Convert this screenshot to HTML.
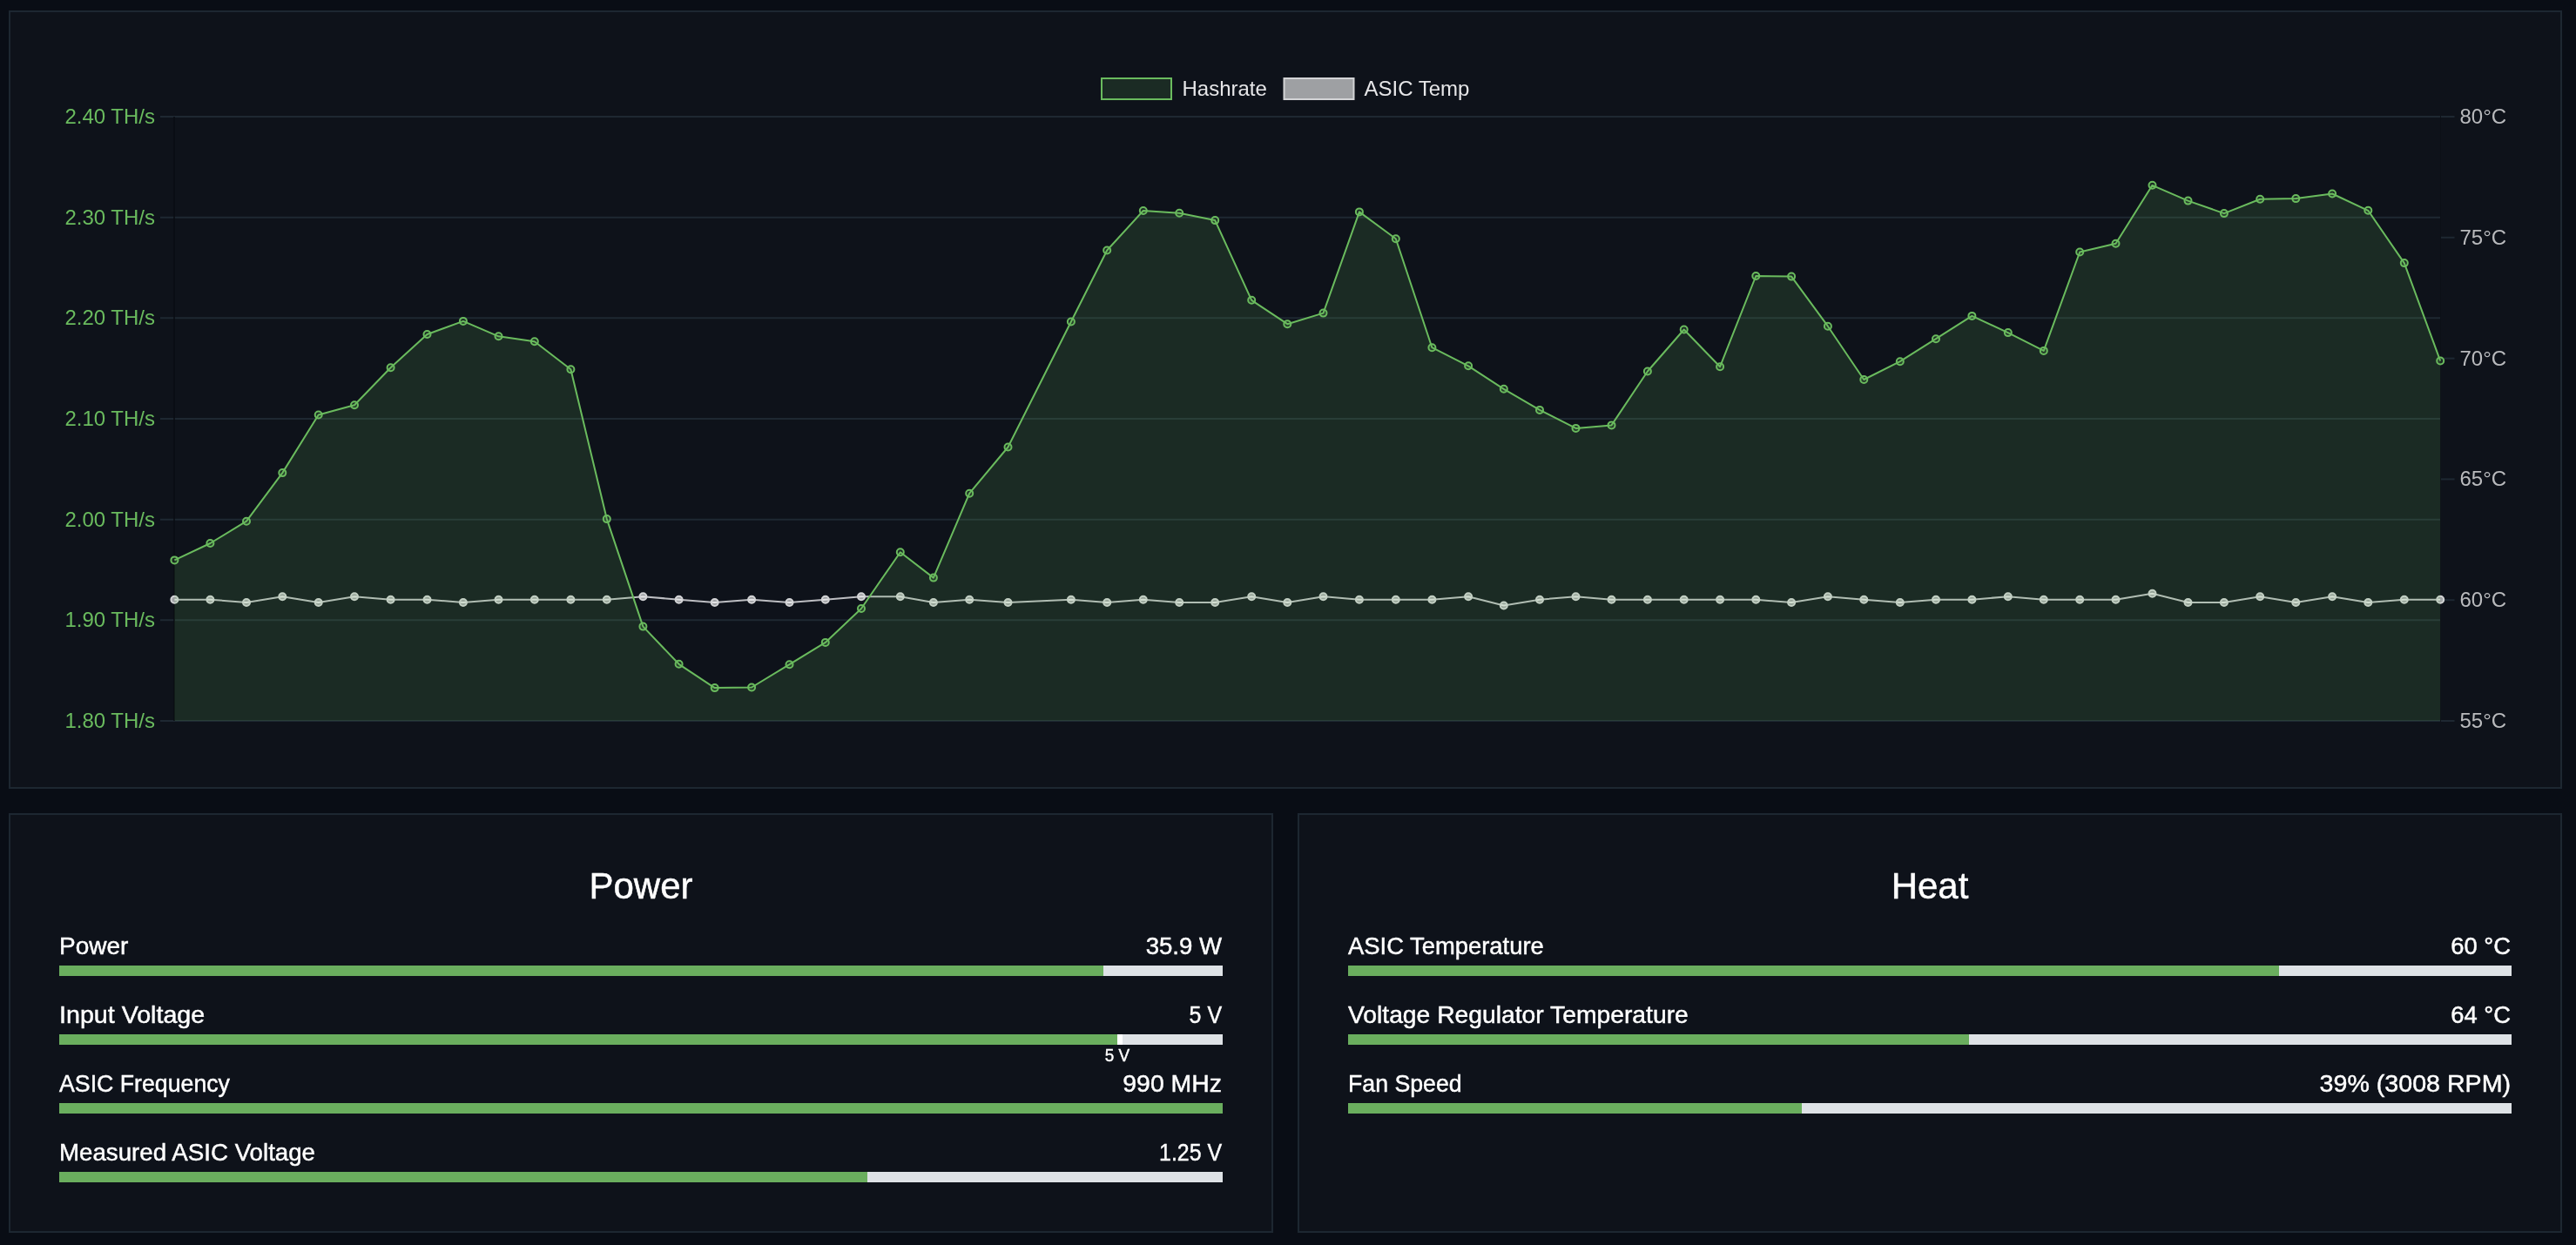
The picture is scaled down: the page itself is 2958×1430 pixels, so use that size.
<!DOCTYPE html>
<html><head><meta charset="utf-8"><title>AxeOS</title>
<style>
html,body{margin:0;padding:0;}
body{width:2958px;height:1430px;overflow:hidden;background:#090d15;position:relative;font-family:"Liberation Sans",sans-serif;}
.card{position:absolute;box-sizing:border-box;border:2px solid #1d2731;background:#0e121a;}
.chart{position:absolute;left:0;top:0;will-change:transform;}
.txt{position:absolute;left:0;top:0;width:2958px;height:1430px;will-change:transform;}
.lax{font-family:"Liberation Sans",sans-serif;font-size:24px;fill:#6abb5e;}
.rax{font-family:"Liberation Sans",sans-serif;font-size:24px;fill:#b9babd;}
.leg{font-family:"Liberation Sans",sans-serif;font-size:24px;fill:#e6e6e8;}
.title{position:absolute;top:993px;width:1452px;text-align:center;color:#fff;font-size:42px;line-height:50px;}
.lab,.val{position:absolute;color:#fff;font-size:28px;line-height:34px;white-space:nowrap;}
.lab,.val,.title,.mtxt{-webkit-text-stroke:0.45px #fff;}
.lab{transform-origin:0 50%;}
.val{transform-origin:100% 50%;margin-left:-1px;}
.val{width:1336px;text-align:right;}
.bar{position:absolute;width:1336px;height:12px;background:#dee2e6;}
.fillb{height:12px;background:#6aae5e;}
.mark{position:absolute;width:6px;height:12px;background:#fff;}
.mtxt{position:absolute;width:86px;text-align:center;color:#fff;font-size:21px;line-height:24px;transform:scaleX(0.9);}
</style></head>
<body>
<div class="card" style="left:10px;top:12px;width:2932px;height:894px"></div>
<div class="card" style="left:10px;top:934px;width:1452px;height:482px"></div>
<div class="card" style="left:1490px;top:934px;width:1452px;height:482px"></div>
<svg class="chart" width="2958" height="906" viewBox="0 0 2958 906">
<defs><clipPath id="ca"><rect x="190" y="120" width="2625" height="716"/></clipPath></defs>
<line x1="184" y1="134" x2="2802" y2="134" stroke="#1e2832" stroke-width="2"/>
<line x1="184" y1="249.7" x2="2802" y2="249.7" stroke="#1e2832" stroke-width="2"/>
<line x1="184" y1="365.3" x2="2802" y2="365.3" stroke="#1e2832" stroke-width="2"/>
<line x1="184" y1="481" x2="2802" y2="481" stroke="#1e2832" stroke-width="2"/>
<line x1="184" y1="596.7" x2="2802" y2="596.7" stroke="#1e2832" stroke-width="2"/>
<line x1="184" y1="712.3" x2="2802" y2="712.3" stroke="#1e2832" stroke-width="2"/>
<line x1="184" y1="828" x2="2802" y2="828" stroke="#1e2832" stroke-width="2"/>
<line x1="200" y1="134" x2="200" y2="828" stroke="#0a0d13" stroke-width="1.6"/>
<line x1="2802.5" y1="134" x2="2802.5" y2="828" stroke="#0c1017" stroke-width="1"/>
<line x1="2803" y1="134" x2="2818.5" y2="134" stroke="#1e2832" stroke-width="2"/>
<line x1="2803" y1="272.8" x2="2818.5" y2="272.8" stroke="#1e2832" stroke-width="2"/>
<line x1="2803" y1="411.6" x2="2818.5" y2="411.6" stroke="#1e2832" stroke-width="2"/>
<line x1="2803" y1="550.4" x2="2818.5" y2="550.4" stroke="#1e2832" stroke-width="2"/>
<line x1="2803" y1="689.2" x2="2818.5" y2="689.2" stroke="#1e2832" stroke-width="2"/>
<line x1="2803" y1="828" x2="2818.5" y2="828" stroke="#1e2832" stroke-width="2"/>
<text x="178" y="142" text-anchor="end" class="lax">2.40 TH/s</text>
<text x="178" y="257.7" text-anchor="end" class="lax">2.30 TH/s</text>
<text x="178" y="373.3" text-anchor="end" class="lax">2.20 TH/s</text>
<text x="178" y="489" text-anchor="end" class="lax">2.10 TH/s</text>
<text x="178" y="604.7" text-anchor="end" class="lax">2.00 TH/s</text>
<text x="178" y="720.3" text-anchor="end" class="lax">1.90 TH/s</text>
<text x="178" y="836" text-anchor="end" class="lax">1.80 TH/s</text>
<text x="2824.5" y="142" class="rax">80°C</text>
<text x="2824.5" y="280.8" class="rax">75°C</text>
<text x="2824.5" y="419.6" class="rax">70°C</text>
<text x="2824.5" y="558.4" class="rax">65°C</text>
<text x="2824.5" y="697.2" class="rax">60°C</text>
<text x="2824.5" y="836" class="rax">55°C</text>
<g clip-path="url(#ca)"><polyline points="200.4,688.7 241.4,688.7 283,692 324.3,685.2 365.7,692 407,685.2 448.6,688.7 490.5,688.7 531.9,692 572.5,688.7 613.8,688.7 655.4,688.7 696.8,688.7 738.4,685.2 779.6,688.7 820.7,692 863.1,688.7 906.5,692 947.8,688.7 989,685.2 1033.8,685.2 1071.9,692 1113.2,688.7 1157.5,692 1229.9,688.7 1271.2,692 1312.8,688.7 1354.2,692 1395.2,692 1437.2,685.2 1478.3,692 1519.5,685.2 1560.9,688.7 1602.8,688.7 1644.4,688.7 1686.1,685.2 1726.8,695.5 1768,688.7 1809.5,685.2 1850.5,688.7 1891.9,688.7 1933.7,688.7 1975.1,688.7 2016.3,688.7 2057.1,692 2098.9,685.2 2140.3,688.7 2181.8,692 2223,688.7 2264.4,688.7 2305.8,685.2 2346.8,688.7 2388.2,688.7 2429.5,688.7 2471.5,681.7 2512.5,692 2553.9,692 2595.2,685.2 2636.3,692 2678.1,685.2 2719.3,692 2760.8,688.7 2802.2,688.7" fill="none" stroke="#bdbec2" stroke-width="2" stroke-linejoin="round"/>
<circle cx="200.4" cy="688.7" r="4" fill="rgba(255,255,255,0.6)" stroke="#d3d4d6" stroke-width="2"/>
<circle cx="241.4" cy="688.7" r="4" fill="rgba(255,255,255,0.6)" stroke="#d3d4d6" stroke-width="2"/>
<circle cx="283" cy="692" r="4" fill="rgba(255,255,255,0.6)" stroke="#d3d4d6" stroke-width="2"/>
<circle cx="324.3" cy="685.2" r="4" fill="rgba(255,255,255,0.6)" stroke="#d3d4d6" stroke-width="2"/>
<circle cx="365.7" cy="692" r="4" fill="rgba(255,255,255,0.6)" stroke="#d3d4d6" stroke-width="2"/>
<circle cx="407" cy="685.2" r="4" fill="rgba(255,255,255,0.6)" stroke="#d3d4d6" stroke-width="2"/>
<circle cx="448.6" cy="688.7" r="4" fill="rgba(255,255,255,0.6)" stroke="#d3d4d6" stroke-width="2"/>
<circle cx="490.5" cy="688.7" r="4" fill="rgba(255,255,255,0.6)" stroke="#d3d4d6" stroke-width="2"/>
<circle cx="531.9" cy="692" r="4" fill="rgba(255,255,255,0.6)" stroke="#d3d4d6" stroke-width="2"/>
<circle cx="572.5" cy="688.7" r="4" fill="rgba(255,255,255,0.6)" stroke="#d3d4d6" stroke-width="2"/>
<circle cx="613.8" cy="688.7" r="4" fill="rgba(255,255,255,0.6)" stroke="#d3d4d6" stroke-width="2"/>
<circle cx="655.4" cy="688.7" r="4" fill="rgba(255,255,255,0.6)" stroke="#d3d4d6" stroke-width="2"/>
<circle cx="696.8" cy="688.7" r="4" fill="rgba(255,255,255,0.6)" stroke="#d3d4d6" stroke-width="2"/>
<circle cx="738.4" cy="685.2" r="4" fill="rgba(255,255,255,0.6)" stroke="#d3d4d6" stroke-width="2"/>
<circle cx="779.6" cy="688.7" r="4" fill="rgba(255,255,255,0.6)" stroke="#d3d4d6" stroke-width="2"/>
<circle cx="820.7" cy="692" r="4" fill="rgba(255,255,255,0.6)" stroke="#d3d4d6" stroke-width="2"/>
<circle cx="863.1" cy="688.7" r="4" fill="rgba(255,255,255,0.6)" stroke="#d3d4d6" stroke-width="2"/>
<circle cx="906.5" cy="692" r="4" fill="rgba(255,255,255,0.6)" stroke="#d3d4d6" stroke-width="2"/>
<circle cx="947.8" cy="688.7" r="4" fill="rgba(255,255,255,0.6)" stroke="#d3d4d6" stroke-width="2"/>
<circle cx="989" cy="685.2" r="4" fill="rgba(255,255,255,0.6)" stroke="#d3d4d6" stroke-width="2"/>
<circle cx="1033.8" cy="685.2" r="4" fill="rgba(255,255,255,0.6)" stroke="#d3d4d6" stroke-width="2"/>
<circle cx="1071.9" cy="692" r="4" fill="rgba(255,255,255,0.6)" stroke="#d3d4d6" stroke-width="2"/>
<circle cx="1113.2" cy="688.7" r="4" fill="rgba(255,255,255,0.6)" stroke="#d3d4d6" stroke-width="2"/>
<circle cx="1157.5" cy="692" r="4" fill="rgba(255,255,255,0.6)" stroke="#d3d4d6" stroke-width="2"/>
<circle cx="1229.9" cy="688.7" r="4" fill="rgba(255,255,255,0.6)" stroke="#d3d4d6" stroke-width="2"/>
<circle cx="1271.2" cy="692" r="4" fill="rgba(255,255,255,0.6)" stroke="#d3d4d6" stroke-width="2"/>
<circle cx="1312.8" cy="688.7" r="4" fill="rgba(255,255,255,0.6)" stroke="#d3d4d6" stroke-width="2"/>
<circle cx="1354.2" cy="692" r="4" fill="rgba(255,255,255,0.6)" stroke="#d3d4d6" stroke-width="2"/>
<circle cx="1395.2" cy="692" r="4" fill="rgba(255,255,255,0.6)" stroke="#d3d4d6" stroke-width="2"/>
<circle cx="1437.2" cy="685.2" r="4" fill="rgba(255,255,255,0.6)" stroke="#d3d4d6" stroke-width="2"/>
<circle cx="1478.3" cy="692" r="4" fill="rgba(255,255,255,0.6)" stroke="#d3d4d6" stroke-width="2"/>
<circle cx="1519.5" cy="685.2" r="4" fill="rgba(255,255,255,0.6)" stroke="#d3d4d6" stroke-width="2"/>
<circle cx="1560.9" cy="688.7" r="4" fill="rgba(255,255,255,0.6)" stroke="#d3d4d6" stroke-width="2"/>
<circle cx="1602.8" cy="688.7" r="4" fill="rgba(255,255,255,0.6)" stroke="#d3d4d6" stroke-width="2"/>
<circle cx="1644.4" cy="688.7" r="4" fill="rgba(255,255,255,0.6)" stroke="#d3d4d6" stroke-width="2"/>
<circle cx="1686.1" cy="685.2" r="4" fill="rgba(255,255,255,0.6)" stroke="#d3d4d6" stroke-width="2"/>
<circle cx="1726.8" cy="695.5" r="4" fill="rgba(255,255,255,0.6)" stroke="#d3d4d6" stroke-width="2"/>
<circle cx="1768" cy="688.7" r="4" fill="rgba(255,255,255,0.6)" stroke="#d3d4d6" stroke-width="2"/>
<circle cx="1809.5" cy="685.2" r="4" fill="rgba(255,255,255,0.6)" stroke="#d3d4d6" stroke-width="2"/>
<circle cx="1850.5" cy="688.7" r="4" fill="rgba(255,255,255,0.6)" stroke="#d3d4d6" stroke-width="2"/>
<circle cx="1891.9" cy="688.7" r="4" fill="rgba(255,255,255,0.6)" stroke="#d3d4d6" stroke-width="2"/>
<circle cx="1933.7" cy="688.7" r="4" fill="rgba(255,255,255,0.6)" stroke="#d3d4d6" stroke-width="2"/>
<circle cx="1975.1" cy="688.7" r="4" fill="rgba(255,255,255,0.6)" stroke="#d3d4d6" stroke-width="2"/>
<circle cx="2016.3" cy="688.7" r="4" fill="rgba(255,255,255,0.6)" stroke="#d3d4d6" stroke-width="2"/>
<circle cx="2057.1" cy="692" r="4" fill="rgba(255,255,255,0.6)" stroke="#d3d4d6" stroke-width="2"/>
<circle cx="2098.9" cy="685.2" r="4" fill="rgba(255,255,255,0.6)" stroke="#d3d4d6" stroke-width="2"/>
<circle cx="2140.3" cy="688.7" r="4" fill="rgba(255,255,255,0.6)" stroke="#d3d4d6" stroke-width="2"/>
<circle cx="2181.8" cy="692" r="4" fill="rgba(255,255,255,0.6)" stroke="#d3d4d6" stroke-width="2"/>
<circle cx="2223" cy="688.7" r="4" fill="rgba(255,255,255,0.6)" stroke="#d3d4d6" stroke-width="2"/>
<circle cx="2264.4" cy="688.7" r="4" fill="rgba(255,255,255,0.6)" stroke="#d3d4d6" stroke-width="2"/>
<circle cx="2305.8" cy="685.2" r="4" fill="rgba(255,255,255,0.6)" stroke="#d3d4d6" stroke-width="2"/>
<circle cx="2346.8" cy="688.7" r="4" fill="rgba(255,255,255,0.6)" stroke="#d3d4d6" stroke-width="2"/>
<circle cx="2388.2" cy="688.7" r="4" fill="rgba(255,255,255,0.6)" stroke="#d3d4d6" stroke-width="2"/>
<circle cx="2429.5" cy="688.7" r="4" fill="rgba(255,255,255,0.6)" stroke="#d3d4d6" stroke-width="2"/>
<circle cx="2471.5" cy="681.7" r="4" fill="rgba(255,255,255,0.6)" stroke="#d3d4d6" stroke-width="2"/>
<circle cx="2512.5" cy="692" r="4" fill="rgba(255,255,255,0.6)" stroke="#d3d4d6" stroke-width="2"/>
<circle cx="2553.9" cy="692" r="4" fill="rgba(255,255,255,0.6)" stroke="#d3d4d6" stroke-width="2"/>
<circle cx="2595.2" cy="685.2" r="4" fill="rgba(255,255,255,0.6)" stroke="#d3d4d6" stroke-width="2"/>
<circle cx="2636.3" cy="692" r="4" fill="rgba(255,255,255,0.6)" stroke="#d3d4d6" stroke-width="2"/>
<circle cx="2678.1" cy="685.2" r="4" fill="rgba(255,255,255,0.6)" stroke="#d3d4d6" stroke-width="2"/>
<circle cx="2719.3" cy="692" r="4" fill="rgba(255,255,255,0.6)" stroke="#d3d4d6" stroke-width="2"/>
<circle cx="2760.8" cy="688.7" r="4" fill="rgba(255,255,255,0.6)" stroke="#d3d4d6" stroke-width="2"/>
<circle cx="2802.2" cy="688.7" r="4" fill="rgba(255,255,255,0.6)" stroke="#d3d4d6" stroke-width="2"/>
<polygon points="200.4,643.4 241.4,624 283,598.7 324.3,543.1 365.7,476.5 407,465.2 448.6,422.2 490.5,384 531.9,368.9 572.5,386.3 613.8,392.2 655.4,424.2 696.8,596.1 738.4,719.6 779.6,762.8 820.7,790.1 863.1,789.5 906.5,763.2 947.8,737.9 989,699 1033.8,634.3 1071.9,663.6 1113.2,566.7 1157.5,513.5 1229.9,369.5 1271.2,287.5 1312.8,242 1354.2,244.7 1395.2,253.1 1437.2,344.8 1478.3,372.2 1519.5,359.6 1560.9,243.4 1602.8,274.2 1644.4,399.2 1686.1,420.3 1726.8,446.8 1768,470.9 1809.5,491.9 1850.5,488.4 1891.9,426.5 1933.7,378.5 1975.1,421.2 2016.3,317 2057.1,317.6 2098.9,374.7 2140.3,436 2181.8,415.2 2223,389.2 2264.4,362.9 2305.8,382.1 2346.8,402.9 2388.2,289.5 2429.5,279.7 2471.5,212.8 2512.5,230.6 2553.9,245.1 2595.2,228.7 2636.3,228.1 2678.1,222.5 2719.3,241.8 2760.8,302.1 2802.2,414.5 2802.2,828 200.4,828" fill="rgba(106,190,94,0.15)"/>
<polyline points="200.4,643.4 241.4,624 283,598.7 324.3,543.1 365.7,476.5 407,465.2 448.6,422.2 490.5,384 531.9,368.9 572.5,386.3 613.8,392.2 655.4,424.2 696.8,596.1 738.4,719.6 779.6,762.8 820.7,790.1 863.1,789.5 906.5,763.2 947.8,737.9 989,699 1033.8,634.3 1071.9,663.6 1113.2,566.7 1157.5,513.5 1229.9,369.5 1271.2,287.5 1312.8,242 1354.2,244.7 1395.2,253.1 1437.2,344.8 1478.3,372.2 1519.5,359.6 1560.9,243.4 1602.8,274.2 1644.4,399.2 1686.1,420.3 1726.8,446.8 1768,470.9 1809.5,491.9 1850.5,488.4 1891.9,426.5 1933.7,378.5 1975.1,421.2 2016.3,317 2057.1,317.6 2098.9,374.7 2140.3,436 2181.8,415.2 2223,389.2 2264.4,362.9 2305.8,382.1 2346.8,402.9 2388.2,289.5 2429.5,279.7 2471.5,212.8 2512.5,230.6 2553.9,245.1 2595.2,228.7 2636.3,228.1 2678.1,222.5 2719.3,241.8 2760.8,302.1 2802.2,414.5" fill="none" stroke="#6abb5e" stroke-width="2" stroke-linejoin="round"/>
<circle cx="200.4" cy="643.4" r="4" fill="rgba(106,190,94,0.15)" stroke="#6abb5e" stroke-width="2"/>
<circle cx="241.4" cy="624" r="4" fill="rgba(106,190,94,0.15)" stroke="#6abb5e" stroke-width="2"/>
<circle cx="283" cy="598.7" r="4" fill="rgba(106,190,94,0.15)" stroke="#6abb5e" stroke-width="2"/>
<circle cx="324.3" cy="543.1" r="4" fill="rgba(106,190,94,0.15)" stroke="#6abb5e" stroke-width="2"/>
<circle cx="365.7" cy="476.5" r="4" fill="rgba(106,190,94,0.15)" stroke="#6abb5e" stroke-width="2"/>
<circle cx="407" cy="465.2" r="4" fill="rgba(106,190,94,0.15)" stroke="#6abb5e" stroke-width="2"/>
<circle cx="448.6" cy="422.2" r="4" fill="rgba(106,190,94,0.15)" stroke="#6abb5e" stroke-width="2"/>
<circle cx="490.5" cy="384" r="4" fill="rgba(106,190,94,0.15)" stroke="#6abb5e" stroke-width="2"/>
<circle cx="531.9" cy="368.9" r="4" fill="rgba(106,190,94,0.15)" stroke="#6abb5e" stroke-width="2"/>
<circle cx="572.5" cy="386.3" r="4" fill="rgba(106,190,94,0.15)" stroke="#6abb5e" stroke-width="2"/>
<circle cx="613.8" cy="392.2" r="4" fill="rgba(106,190,94,0.15)" stroke="#6abb5e" stroke-width="2"/>
<circle cx="655.4" cy="424.2" r="4" fill="rgba(106,190,94,0.15)" stroke="#6abb5e" stroke-width="2"/>
<circle cx="696.8" cy="596.1" r="4" fill="rgba(106,190,94,0.15)" stroke="#6abb5e" stroke-width="2"/>
<circle cx="738.4" cy="719.6" r="4" fill="rgba(106,190,94,0.15)" stroke="#6abb5e" stroke-width="2"/>
<circle cx="779.6" cy="762.8" r="4" fill="rgba(106,190,94,0.15)" stroke="#6abb5e" stroke-width="2"/>
<circle cx="820.7" cy="790.1" r="4" fill="rgba(106,190,94,0.15)" stroke="#6abb5e" stroke-width="2"/>
<circle cx="863.1" cy="789.5" r="4" fill="rgba(106,190,94,0.15)" stroke="#6abb5e" stroke-width="2"/>
<circle cx="906.5" cy="763.2" r="4" fill="rgba(106,190,94,0.15)" stroke="#6abb5e" stroke-width="2"/>
<circle cx="947.8" cy="737.9" r="4" fill="rgba(106,190,94,0.15)" stroke="#6abb5e" stroke-width="2"/>
<circle cx="989" cy="699" r="4" fill="rgba(106,190,94,0.15)" stroke="#6abb5e" stroke-width="2"/>
<circle cx="1033.8" cy="634.3" r="4" fill="rgba(106,190,94,0.15)" stroke="#6abb5e" stroke-width="2"/>
<circle cx="1071.9" cy="663.6" r="4" fill="rgba(106,190,94,0.15)" stroke="#6abb5e" stroke-width="2"/>
<circle cx="1113.2" cy="566.7" r="4" fill="rgba(106,190,94,0.15)" stroke="#6abb5e" stroke-width="2"/>
<circle cx="1157.5" cy="513.5" r="4" fill="rgba(106,190,94,0.15)" stroke="#6abb5e" stroke-width="2"/>
<circle cx="1229.9" cy="369.5" r="4" fill="rgba(106,190,94,0.15)" stroke="#6abb5e" stroke-width="2"/>
<circle cx="1271.2" cy="287.5" r="4" fill="rgba(106,190,94,0.15)" stroke="#6abb5e" stroke-width="2"/>
<circle cx="1312.8" cy="242" r="4" fill="rgba(106,190,94,0.15)" stroke="#6abb5e" stroke-width="2"/>
<circle cx="1354.2" cy="244.7" r="4" fill="rgba(106,190,94,0.15)" stroke="#6abb5e" stroke-width="2"/>
<circle cx="1395.2" cy="253.1" r="4" fill="rgba(106,190,94,0.15)" stroke="#6abb5e" stroke-width="2"/>
<circle cx="1437.2" cy="344.8" r="4" fill="rgba(106,190,94,0.15)" stroke="#6abb5e" stroke-width="2"/>
<circle cx="1478.3" cy="372.2" r="4" fill="rgba(106,190,94,0.15)" stroke="#6abb5e" stroke-width="2"/>
<circle cx="1519.5" cy="359.6" r="4" fill="rgba(106,190,94,0.15)" stroke="#6abb5e" stroke-width="2"/>
<circle cx="1560.9" cy="243.4" r="4" fill="rgba(106,190,94,0.15)" stroke="#6abb5e" stroke-width="2"/>
<circle cx="1602.8" cy="274.2" r="4" fill="rgba(106,190,94,0.15)" stroke="#6abb5e" stroke-width="2"/>
<circle cx="1644.4" cy="399.2" r="4" fill="rgba(106,190,94,0.15)" stroke="#6abb5e" stroke-width="2"/>
<circle cx="1686.1" cy="420.3" r="4" fill="rgba(106,190,94,0.15)" stroke="#6abb5e" stroke-width="2"/>
<circle cx="1726.8" cy="446.8" r="4" fill="rgba(106,190,94,0.15)" stroke="#6abb5e" stroke-width="2"/>
<circle cx="1768" cy="470.9" r="4" fill="rgba(106,190,94,0.15)" stroke="#6abb5e" stroke-width="2"/>
<circle cx="1809.5" cy="491.9" r="4" fill="rgba(106,190,94,0.15)" stroke="#6abb5e" stroke-width="2"/>
<circle cx="1850.5" cy="488.4" r="4" fill="rgba(106,190,94,0.15)" stroke="#6abb5e" stroke-width="2"/>
<circle cx="1891.9" cy="426.5" r="4" fill="rgba(106,190,94,0.15)" stroke="#6abb5e" stroke-width="2"/>
<circle cx="1933.7" cy="378.5" r="4" fill="rgba(106,190,94,0.15)" stroke="#6abb5e" stroke-width="2"/>
<circle cx="1975.1" cy="421.2" r="4" fill="rgba(106,190,94,0.15)" stroke="#6abb5e" stroke-width="2"/>
<circle cx="2016.3" cy="317" r="4" fill="rgba(106,190,94,0.15)" stroke="#6abb5e" stroke-width="2"/>
<circle cx="2057.1" cy="317.6" r="4" fill="rgba(106,190,94,0.15)" stroke="#6abb5e" stroke-width="2"/>
<circle cx="2098.9" cy="374.7" r="4" fill="rgba(106,190,94,0.15)" stroke="#6abb5e" stroke-width="2"/>
<circle cx="2140.3" cy="436" r="4" fill="rgba(106,190,94,0.15)" stroke="#6abb5e" stroke-width="2"/>
<circle cx="2181.8" cy="415.2" r="4" fill="rgba(106,190,94,0.15)" stroke="#6abb5e" stroke-width="2"/>
<circle cx="2223" cy="389.2" r="4" fill="rgba(106,190,94,0.15)" stroke="#6abb5e" stroke-width="2"/>
<circle cx="2264.4" cy="362.9" r="4" fill="rgba(106,190,94,0.15)" stroke="#6abb5e" stroke-width="2"/>
<circle cx="2305.8" cy="382.1" r="4" fill="rgba(106,190,94,0.15)" stroke="#6abb5e" stroke-width="2"/>
<circle cx="2346.8" cy="402.9" r="4" fill="rgba(106,190,94,0.15)" stroke="#6abb5e" stroke-width="2"/>
<circle cx="2388.2" cy="289.5" r="4" fill="rgba(106,190,94,0.15)" stroke="#6abb5e" stroke-width="2"/>
<circle cx="2429.5" cy="279.7" r="4" fill="rgba(106,190,94,0.15)" stroke="#6abb5e" stroke-width="2"/>
<circle cx="2471.5" cy="212.8" r="4" fill="rgba(106,190,94,0.15)" stroke="#6abb5e" stroke-width="2"/>
<circle cx="2512.5" cy="230.6" r="4" fill="rgba(106,190,94,0.15)" stroke="#6abb5e" stroke-width="2"/>
<circle cx="2553.9" cy="245.1" r="4" fill="rgba(106,190,94,0.15)" stroke="#6abb5e" stroke-width="2"/>
<circle cx="2595.2" cy="228.7" r="4" fill="rgba(106,190,94,0.15)" stroke="#6abb5e" stroke-width="2"/>
<circle cx="2636.3" cy="228.1" r="4" fill="rgba(106,190,94,0.15)" stroke="#6abb5e" stroke-width="2"/>
<circle cx="2678.1" cy="222.5" r="4" fill="rgba(106,190,94,0.15)" stroke="#6abb5e" stroke-width="2"/>
<circle cx="2719.3" cy="241.8" r="4" fill="rgba(106,190,94,0.15)" stroke="#6abb5e" stroke-width="2"/>
<circle cx="2760.8" cy="302.1" r="4" fill="rgba(106,190,94,0.15)" stroke="#6abb5e" stroke-width="2"/>
<circle cx="2802.2" cy="414.5" r="4" fill="rgba(106,190,94,0.15)" stroke="#6abb5e" stroke-width="2"/>
</g>
<rect x="1265" y="90" width="80" height="24" fill="rgba(106,190,94,0.15)" stroke="#6abb5e" stroke-width="2"/>
<text x="1357.5" y="110" class="leg">Hashrate</text>
<rect x="1474.5" y="90" width="80" height="24" fill="rgba(255,255,255,0.6)" stroke="#d3d4d6" stroke-width="2"/>
<text x="1566.5" y="110" class="leg">ASIC Temp</text>
</svg>
<div class="txt">
<div class="title" style="left:10px">Power</div>
<div class="title" style="left:1490px">Heat</div>
<div class="lab" style="left:68px;top:1070px;transform:scaleX(1.0)">Power</div>
<div class="val" style="left:68px;top:1070px;transform:scaleX(0.985)">35.9 W</div>
<div class="bar" style="left:68px;top:1109px"><div class="fillb" style="width:1199.1px"></div></div>
<div class="lab" style="left:68px;top:1149px;transform:scaleX(1.023)">Input Voltage</div>
<div class="val" style="left:68px;top:1149px;transform:scaleX(0.89)">5 V</div>
<div class="bar" style="left:68px;top:1188px"><div class="fillb" style="width:1215.0px"></div></div>
<div class="mark" style="left:1283px;top:1188px"></div>
<div class="mtxt" style="left:1239.5px;top:1200px">5 V</div>
<div class="lab" style="left:68px;top:1228px;transform:scaleX(0.954)">ASIC Frequency</div>
<div class="val" style="left:68px;top:1228px;transform:scaleX(1.015)">990 MHz</div>
<div class="bar" style="left:68px;top:1267px"><div class="fillb" style="width:1336.0px"></div></div>
<div class="lab" style="left:68px;top:1307px;transform:scaleX(0.989)">Measured ASIC Voltage</div>
<div class="val" style="left:68px;top:1307px;transform:scaleX(0.889)">1.25 V</div>
<div class="bar" style="left:68px;top:1346px"><div class="fillb" style="width:927.8px"></div></div>
<div class="lab" style="left:1548px;top:1070px;transform:scaleX(0.978)">ASIC Temperature</div>
<div class="val" style="left:1548px;top:1070px;transform:scaleX(0.977)">60 °C</div>
<div class="bar" style="left:1548px;top:1109px"><div class="fillb" style="width:1068.8px"></div></div>
<div class="lab" style="left:1548px;top:1149px;transform:scaleX(1.0096)">Voltage Regulator Temperature</div>
<div class="val" style="left:1548px;top:1149px;transform:scaleX(0.977)">64 °C</div>
<div class="bar" style="left:1548px;top:1188px"><div class="fillb" style="width:712.8px"></div></div>
<div class="lab" style="left:1548px;top:1228px;transform:scaleX(0.954)">Fan Speed</div>
<div class="val" style="left:1548px;top:1228px;transform:scaleX(1.0216)">39% (3008 RPM)</div>
<div class="bar" style="left:1548px;top:1267px"><div class="fillb" style="width:521.0px"></div></div>
</div>
</body></html>
